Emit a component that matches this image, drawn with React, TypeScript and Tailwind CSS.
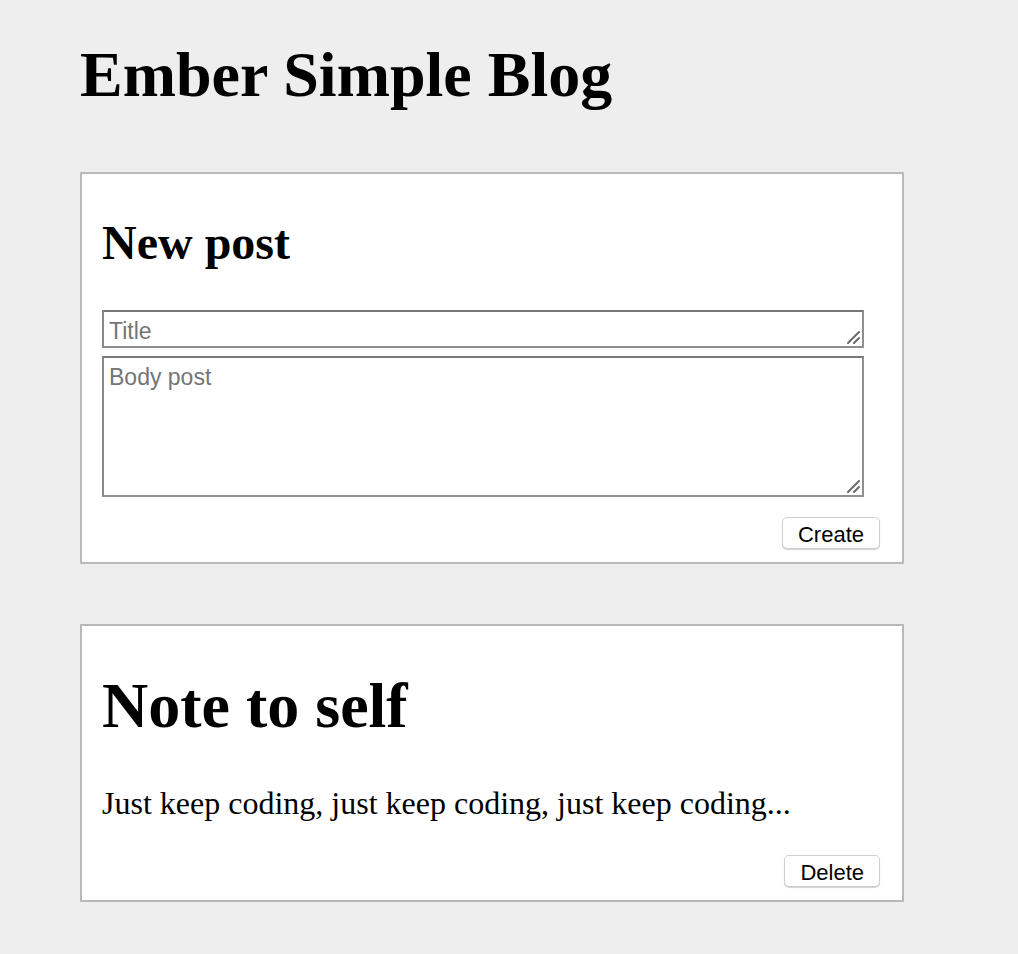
const serif = "font-['Liberation_Serif',serif]";
const field =
  "block w-[762px] px-[5px] pt-[6px] border-2 border-[#8f8f8f] border-t-[#777777] border-l-[#888888] resize-none text-[23px] leading-[26px] font-['Liberation_Sans',Arial,sans-serif] placeholder:text-[#757575] outline-none";

// drawn resize grip, sits over the textarea corner
const Grip = () => (
  <svg className="absolute right-[4px] bottom-[4px]" width="14" height="14" viewBox="0 0 14 14">
    <path d="M2 13 L13 2 M8 13 L13 8" stroke="#6b6b6b" strokeWidth="2" strokeLinecap="round" />
  </svg>
);

const Button = ({ label }: { label: string }) => (
  <button className="h-[32px] px-[15px] pt-[3px] bg-white border border-[#cfcfcf] rounded-[5px] shadow-[0_1px_1px_rgba(0,0,0,0.18)] text-[22px] leading-none text-black font-['Liberation_Sans',Arial,sans-serif]">
    {label}
  </button>
);

const App = () => {
  return (
    <div className="min-h-screen bg-[#eeeeee] pl-[80px] pt-[43px] pb-[52px] text-black">
      <h1 className={`${serif} text-[64px] leading-none font-bold`}>Ember Simple Blog</h1>

      {/* New post form */}
      <div className="mt-[65px] w-[824px] bg-white border-2 border-[#b9b9b9] pt-[45px] pl-[20px] pr-[22px] pb-[13px]">
        <h2 className={`${serif} text-[48px] leading-none font-bold`}>New post</h2>
        <div className="relative mt-[43px] w-[762px]">
          <textarea placeholder="Title" className={`${field} h-[38px]`} />
          <Grip />
        </div>
        <div className="relative mt-[8px] w-[762px]">
          <textarea placeholder="Body post" className={`${field} h-[141px]`} />
          <Grip />
        </div>
        <div className="flex justify-end mt-[20px]">
          <Button label="Create" />
        </div>
      </div>

      {/* Post */}
      <div className="mt-[60px] w-[824px] bg-white border-2 border-[#b9b9b9] pt-[48px] pl-[20px] pr-[22px] pb-[13px]">
        <h1 className={`${serif} text-[64px] leading-none font-bold`}>Note to self</h1>
        <p className={`${serif} mt-[49px] text-[32px] leading-none`}>
          Just keep coding, just keep coding, just keep coding...
        </p>
        <div className="flex justify-end mt-[36px]">
          <Button label="Delete" />
        </div>
      </div>
    </div>
  );
};

export default App;
